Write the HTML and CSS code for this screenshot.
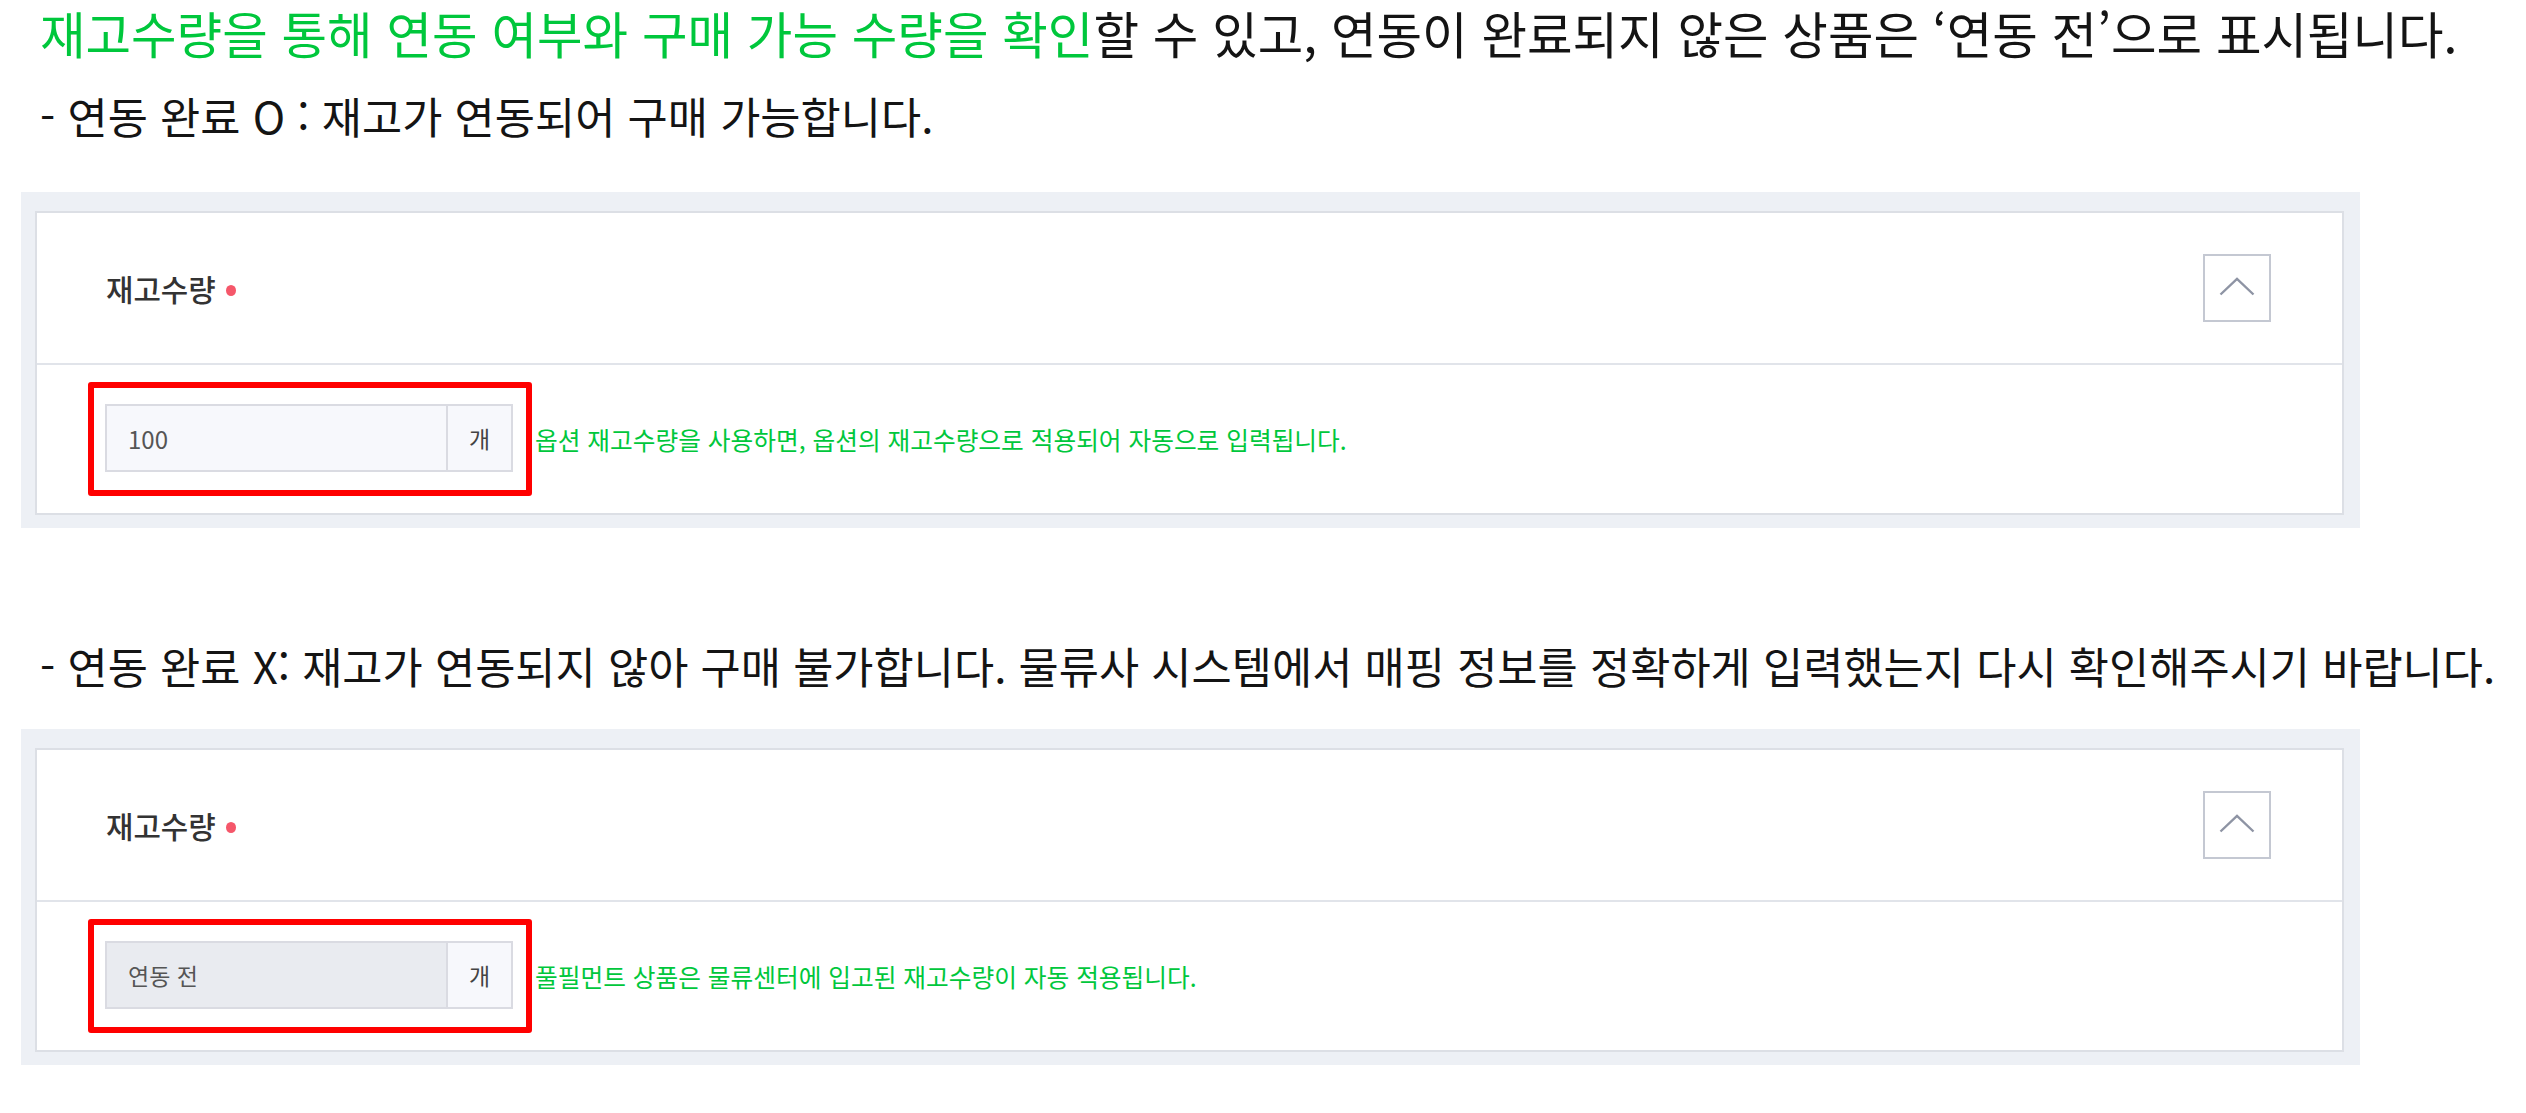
FILE: index.html
```html
<!DOCTYPE html>
<html lang="ko">
<head>
<meta charset="utf-8">
<title>재고수량 연동</title>
<link rel="stylesheet" href="styles.css">
</head>
<body>
<div class="page">
  <p class="lead"><span class="green">재고수량을 통해 연동 여부와 구매 가능 수량을 확인</span>할 수 있고, 연동이 완료되지 않은 상품은 ‘연동 전’으로 표시됩니다.</p>
  <p class="case case-first">- 연동 완료 O : 재고가 연동되어 구매 가능합니다.</p>

  <section class="panel panel-first">
    <div class="card">
      <div class="card-head">
        <span class="label">재고수량</span><span class="req"></span>
        <button class="toggle" type="button" aria-label="접기">
          <svg width="36" height="19" viewBox="0 0 36 19"><path d="M1.5 17.5 L18 1.8 L34.5 17.5" fill="none" stroke="#8e94a4" stroke-width="2.4"/></svg>
        </button>
      </div>
      <div class="card-body">
        <div class="mark">
          <div class="qty">
            <span class="qty-value">100</span>
            <span class="qty-unit">개</span>
          </div>
        </div>
        <span class="help">옵션 재고수량을 사용하면, 옵션의 재고수량으로 적용되어 자동으로 입력됩니다.</span>
      </div>
    </div>
  </section>

  <p class="case case-second">- 연동 완료 X: 재고가 연동되지 않아 구매 불가합니다. 물류사 시스템에서 매핑 정보를 정확하게 입력했는지 다시 확인해주시기 바랍니다.</p>

  <section class="panel panel-second">
    <div class="card">
      <div class="card-head">
        <span class="label">재고수량</span><span class="req"></span>
        <button class="toggle" type="button" aria-label="접기">
          <svg width="36" height="19" viewBox="0 0 36 19"><path d="M1.5 17.5 L18 1.8 L34.5 17.5" fill="none" stroke="#8e94a4" stroke-width="2.4"/></svg>
        </button>
      </div>
      <div class="card-body">
        <div class="mark">
          <div class="qty">
            <span class="qty-value qty-disabled">연동 전</span>
            <span class="qty-unit">개</span>
          </div>
        </div>
        <span class="help">풀필먼트 상품은 물류센터에 입고된 재고수량이 자동 적용됩니다.</span>
      </div>
    </div>
  </section>
</div>
</body>
</html>
```

FILE: styles.css
```css
* { box-sizing: border-box; }

html, body {
  margin: 0;
  padding: 0;
  background: #ffffff;
}

body {
  font-family: "Noto Sans CJK KR", "Noto Sans", sans-serif;
  color: #111111;
}

.page {
  padding-left: 21px;
  width: 2526px;
}

.lead {
  margin: 1px 0 0 0;
  padding-left: 19px;
  font-size: 49.5px;
  line-height: 64px;
  white-space: nowrap;
  color: #141414;
}

.green {
  color: #00c73c;
}

.case {
  margin: 0;
  padding-left: 19px;
  font-size: 43.7px;
  line-height: 60px;
  white-space: nowrap;
  color: #141414;
}

.case-first {
  margin-top: 20px;
}

.case-second {
  margin-top: 107px;
}

.panel {
  width: 2339px;
  background: #edf0f5;
  padding: 19px 16px 13px 14px;
}

.panel-first {
  margin-top: 47px;
}

.panel-second {
  margin-top: 34px;
}

.card {
  background: #ffffff;
  border: 2px solid #dcdfe5;
}

.card-head {
  height: 152px;
  border-bottom: 2px solid #e1e4ea;
  display: flex;
  align-items: center;
  padding: 0 71px 0 69px;
}

.label {
  font-size: 29.8px;
  font-weight: 500;
  color: #333333;
  line-height: 40px;
}

.req {
  width: 10px;
  height: 11px;
  border-radius: 50%;
  background: #f5576a;
  margin-left: 10px;
  margin-top: 4px;
}

.toggle {
  margin-left: auto;
  width: 68px;
  height: 68px;
  padding: 0;
  border: 2px solid #c4c8d2;
  background: #ffffff;
  display: flex;
  align-items: center;
  justify-content: center;
}

.toggle svg {
  display: block;
  margin-top: -3px;
}

.card-body {
  height: 148px;
  display: flex;
  align-items: center;
  padding-left: 51px;
}

.mark {
  border: 6px solid #ff0000;
  border-radius: 3px;
  padding: 16px 13px 18px 11px;
}

.qty {
  width: 408px;
  height: 68px;
  display: flex;
  border: 2px solid #dadbe2;
  background: #f7f8fc;
}

.qty-value {
  width: 341px;
  display: flex;
  align-items: center;
  padding-left: 21px;
  font-size: 24px;
  color: #555555;
  border-right: 2px solid #dadbe2;
}

.qty-disabled {
  background: #e9ebf0;
  font-size: 23px;
}

.qty-unit {
  flex: 1;
  display: flex;
  align-items: center;
  justify-content: center;
  font-size: 23px;
  color: #444444;
}

.help {
  margin-left: 3px;
  font-size: 24.7px;
  color: #00c73c;
  white-space: nowrap;
}
```
